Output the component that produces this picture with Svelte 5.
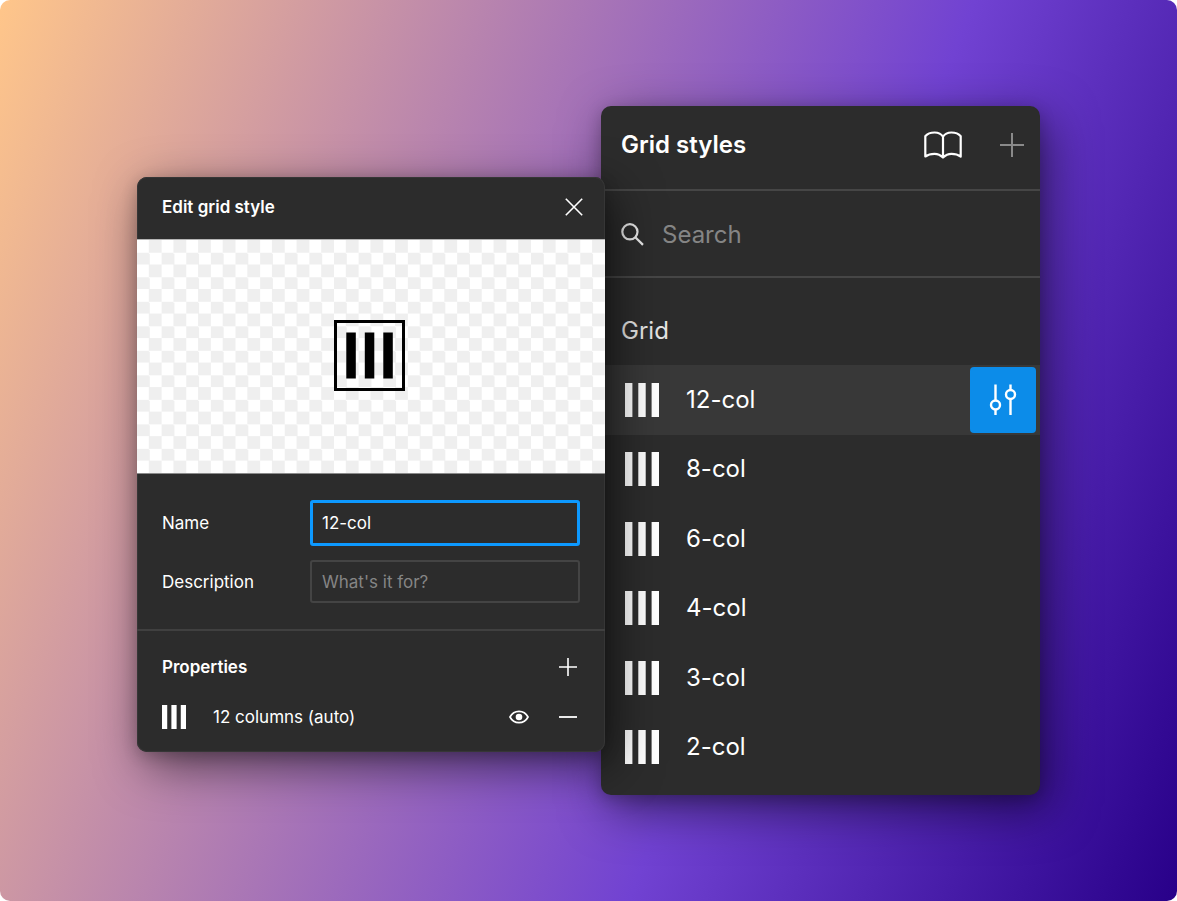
<script>
  let name = $state('12-col');
  let description = $state('');
  let query = $state('');
  let selected = $state('12-col');
  const styles = ['12-col', '8-col', '6-col', '4-col', '3-col', '2-col'];
</script>

{#snippet columns(size)}
  <svg class="columns" width={size} height={size} viewBox="0 0 34 34" fill="currentColor" aria-hidden="true">
    <path d="M0 0h7.4v34H0zM13.3 0h7.4v34h-7.4zM26.6 0H34v34h-7.4z" />
  </svg>
{/snippet}

<main class="canvas">
  <section class="dialog" aria-labelledby="dialog-title">
    <header class="dialog-head">
      <h2 id="dialog-title">Edit grid style</h2>
      <button class="icon" aria-label="Close">
        <svg width="18" height="18" viewBox="0 0 18 18" fill="none" stroke="#fff" stroke-width="1.6"><path d="M.8.8l16.4 16.4M17.2.8L.8 17.2" /></svg>
      </button>
    </header>

    <div class="preview">
      <svg width="71" height="71" viewBox="0 0 71 71" aria-hidden="true">
        <rect x="1.5" y="1.5" width="68" height="68" fill="none" stroke="#000" stroke-width="3" />
        <path d="M12.300 12.500h9.500v46h-9.500zM30.800 12.500h9.500v46h-9.500zM49.300 12.500h9.500v46h-9.500z" />
      </svg>
    </div>

    <form class="fields" onsubmit={(e) => e.preventDefault()}>
      <label for="style-name">Name</label>
      <input id="style-name" class="name" type="text" bind:value={name} />
      <label for="style-description">Description</label>
      <input id="style-description" class="description" type="text" placeholder="What's it for?" bind:value={description} />
    </form>

    <div class="properties">
      <div class="property-head">
        <h3>Properties</h3>
        <button class="icon" aria-label="Add property">
          <svg width="18" height="18" viewBox="0 0 18 18" fill="none" stroke="#fff" stroke-width="1.6"><path d="M9 0v18M0 9h18" /></svg>
        </button>
      </div>
      <div class="property">
        {@render columns(24)}
        <span>12 columns (auto)</span>
        <button class="icon" aria-label="Toggle visibility">
          <svg width="20" height="16" viewBox="0 0 20 16" fill="none" stroke="#fff" stroke-width="1.7">
            <path d="M1 8C3 4.100 6.200 2.300 10 2.300S17 4.100 19 8c-2 3.900-5.200 5.700-9 5.700S3 11.900 1 8z" />
            <circle cx="10" cy="8" r="3.300" fill="#fff" stroke="none" />
          </svg>
        </button>
        <button class="icon" aria-label="Remove property">
          <svg width="18" height="18" viewBox="0 0 18 18" fill="none" stroke="#fff" stroke-width="1.8"><path d="M0 9h18" /></svg>
        </button>
      </div>
    </div>
  </section>

  <section class="library" aria-labelledby="library-title">
    <header class="library-head">
      <h2 id="library-title">Grid styles</h2>
      <button class="icon" aria-label="Libraries">
        <svg width="38" height="28" viewBox="0 0 38 28" fill="none" stroke="#fff" stroke-width="2.200" stroke-linejoin="round">
          <path d="M19 5.800C17.200 2.800 14.200 1.500 10.600 1.500S3.300 2.800 1.300 5.300v20.200c2.600-1.900 5.600-2.700 9.200-2.700 3.800 0 6.300 1.500 8.500 3.700 2.200-2.200 4.700-3.700 8.500-3.700 3.600 0 6.600.8 9.200 2.700V5.300c-2-2.500-5.700-3.800-9.300-3.800S20.800 2.800 19 5.800zV26.500" />
        </svg>
      </button>
      <button class="icon" aria-label="Create style">
        <svg width="24" height="24" viewBox="0 0 24 24" fill="none" stroke="#8a8a8a" stroke-width="2"><path d="M12 0v24M0 12h24" /></svg>
      </button>
    </header>

    <label class="search">
      <svg width="24" height="24" viewBox="0 0 24 24" fill="none" stroke="#e8e8e8" stroke-width="2.200" aria-hidden="true">
        <circle cx="8.900" cy="8.800" r="7.600" /><path d="M14.300 14.200l7.700 7.700" />
      </svg>
      <input type="text" placeholder="Search" aria-label="Search" bind:value={query} />
    </label>

    <h3 class="group">Grid</h3>
    <ul>
      {#each styles as style}
        <li class:active={style === selected}>
          <button class="entry" onclick={() => (selected = style)}>
            {@render columns(34)}
            <span>{style}</span>
          </button>
          {#if style === selected}
            <button class="edit" aria-label="Edit style">
              <svg width="28" height="32" viewBox="0 0 28 32" fill="none" stroke="#fff" stroke-width="2.400">
                <path d="M6.500 .5v16M6.500 25.500v5.500M21.500 .5v5.500M21.500 15v16" />
                <circle cx="6.500" cy="21" r="4.500" /><circle cx="21.500" cy="10.500" r="4.500" />
              </svg>
            </button>
          {/if}
        </li>
      {/each}
    </ul>
  </section>
</main>

<style>
  :global(body) {
    margin: 0;
    background: #fff;
  }

  * {
    box-sizing: border-box;
  }

  .canvas {
    min-height: 100vh;
    display: flex;
    align-items: center;
    justify-content: center;
    border-radius: 10px;
    background: linear-gradient(111deg, #ffc68a 0%, #7142d2 64%, #280089 100%);
    color: #fff;
    font-family: Inter, sans-serif;
  }

  h2,
  h3,
  ul {
    margin: 0;
    padding: 0;
  }

  button {
    padding: 0;
    border: 0;
    background: none;
    color: inherit;
    font: inherit;
    cursor: pointer;
  }

  input {
    min-width: 0;
    border: 0;
    outline: 0;
    background: none;
    color: inherit;
    font: inherit;
  }

  input::placeholder {
    color: #858585;
    opacity: 1;
  }

  svg {
    display: block;
    flex: none;
  }

  .icon {
    display: grid;
    place-items: center;
  }

  .dialog {
    position: relative;
    z-index: 1;
    flex: 0 1 468px;
    min-width: 0;
    margin-top: 28px;
    border-radius: 10px;
    background: #2c2c2c;
    box-shadow: 8px 14px 48px rgba(0, 0, 0, 0.55), 0 4px 16px rgba(0, 0, 0, 0.2), inset 0 0 0 1px #363636;
    font-size: 17px;
    line-height: 24px;
  }

  .dialog-head {
    display: flex;
    align-items: center;
    justify-content: space-between;
    height: 62px;
    padding: 0 22px 2px 25px;
  }

  .dialog h2,
  .dialog h3 {
    font-size: 17px;
    font-weight: 600;
  }

  .preview {
    display: grid;
    place-items: center;
    height: 235px;
    padding: 0 3px 3px 0;
    border-top: 1px solid #b5b5b5;
    border-bottom: 1px solid #8a8a8a;
    background: conic-gradient(#efefef 25%, #fff 0 50%, #efefef 0 75%, #fff 0) 0 0 / calc(100% / 19) calc(200% / 19);
  }

  .fields {
    display: grid;
    grid-template-columns: 148px 1fr;
    align-items: center;
    row-gap: 14px;
    padding: 26px 25px;
    border-bottom: 2px solid #404040;
  }

  .fields input {
    border-radius: 3px;
  }

  .name {
    height: 46px;
    padding: 0 9px;
    border: 3px solid #0d99ff;
  }

  .description {
    height: 43px;
    padding: 0 10px;
    border: 2px solid #444;
  }

  .properties {
    padding: 23px 28px 22px 25px;
  }

  .property-head,
  .property {
    display: flex;
    align-items: center;
    justify-content: space-between;
    height: 26px;
  }

  .property {
    margin-top: 24px;
    gap: 30px;
  }

  .property span {
    flex: 1;
    margin-left: -3px;
  }

  .library {
    display: flex;
    flex-direction: column;
    flex: 0 1 439px;
    min-width: 0;
    min-height: 689px;
    margin-left: -4px;
    padding-bottom: 13px;
    border-radius: 10px;
    background: #2c2c2c;
    box-shadow: 8px 14px 48px rgba(0, 0, 0, 0.5), 0 4px 16px rgba(0, 0, 0, 0.2);
    font-size: 24px;
    line-height: 32px;
  }

  .library-head {
    display: flex;
    align-items: center;
    gap: 38px;
    height: 85px;
    padding: 0 16px 5px 20px;
    border-bottom: 2px solid #464646;
  }

  .library-head h2 {
    flex: 1;
    font-size: 24px;
    font-weight: 600;
  }

  .search {
    display: flex;
    align-items: center;
    gap: 17px;
    height: 87px;
    padding: 2px 20px 0;
    border-bottom: 2px solid #464646;
  }

  .search input {
    flex: 1;
    padding: 0;
  }

  .group {
    padding: 37px 20px 18px;
    font-size: 24px;
    font-weight: 400;
    color: #e4e4e4;
  }

  ul {
    flex: 1;
    display: grid;
    grid-auto-rows: 1fr;
    list-style: none;
  }

  li {
    display: flex;
    align-items: center;
    padding: 0 4px 0 24px;
  }

  .active {
    background: #383838;
  }

  .entry {
    flex: 1;
    display: flex;
    align-items: center;
    gap: 27px;
    text-align: left;
  }

  .edit {
    display: grid;
    place-items: center;
    width: 66px;
    height: 66px;
    border-radius: 4px;
    background: #0c8ce9;
  }
</style>
